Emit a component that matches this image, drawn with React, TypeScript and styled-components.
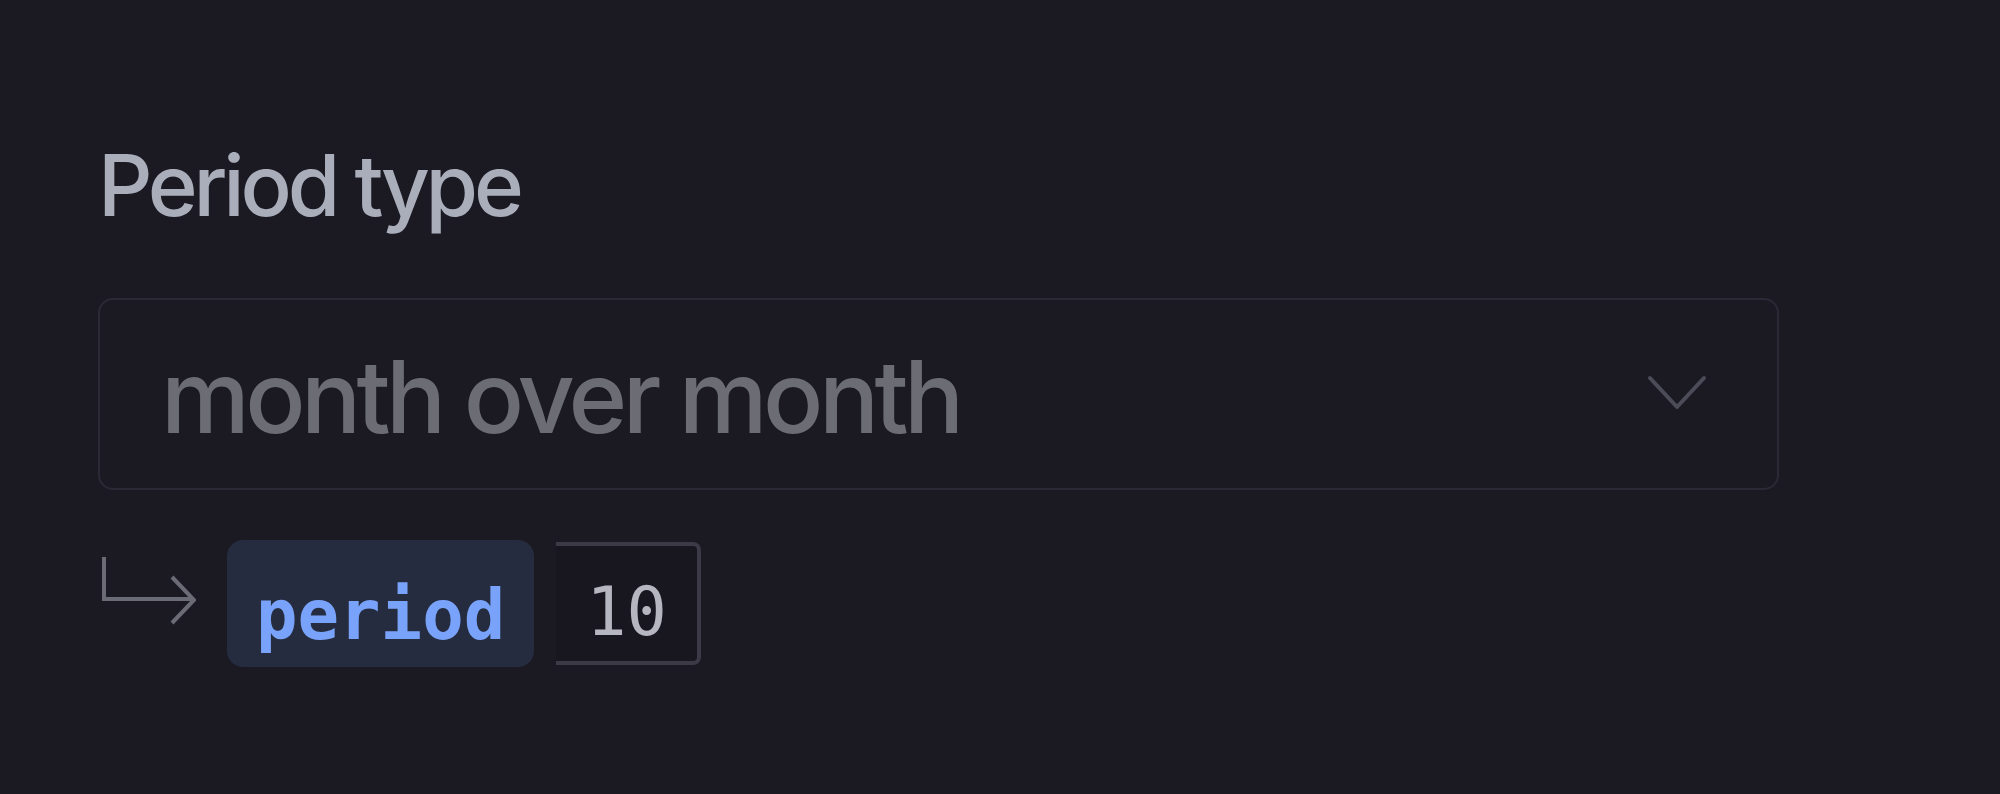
import styled, { createGlobalStyle } from "styled-components";

const GlobalStyle = createGlobalStyle`
  html, body {
    margin: 0;
    padding: 0;
    background: #1b1a23;
  }
  #root {
    min-height: 100vh;
  }
`;

const Page = styled.div`
  min-height: 794px;
  box-sizing: border-box;
  padding: 143px 0 0 98px;
  background: #1b1a23;
`;

const Field = styled.div`
  display: flex;
  flex-direction: column;
  width: 1681px;
`;

const Label = styled.label`
  font-family: Inter, "Noto Sans", sans-serif;
  font-weight: 500;
  font-size: 85px;
  line-height: 85px;
  letter-spacing: -4.2px;
  color: #a9aeba;
  margin-bottom: 70px;
`;

const Select = styled.div`
  box-sizing: border-box;
  height: 192px;
  display: flex;
  align-items: center;
  justify-content: space-between;
  padding: 5px 68px 0 61px;
  border: 2px solid #2a2a36;
  border-radius: 15px;
  background: #1b1a23;
`;

const SelectValue = styled.span`
  font-family: Inter, "Noto Sans", sans-serif;
  font-weight: 500;
  font-size: 100px;
  line-height: 100px;
  letter-spacing: -4.6px;
  color: #6c6c74;
`;

const Chevron = styled.svg`
  width: 64px;
  height: 42px;
  margin-top: -5px;
  flex-shrink: 0;
`;

const ParamRow = styled.div`
  display: flex;
  align-items: flex-start;
  margin-top: 50px;
`;

const ReturnArrow = styled.svg`
  width: 96px;
  height: 75px;
  margin: 15px 31px 0 2px;
  flex-shrink: 0;
`;

const ParamName = styled.span`
  box-sizing: border-box;
  height: 127px;
  padding: 41px 29px 0 29px;
  border-radius: 16px;
  background: #262c3f;
  font-family: "DejaVu Sans Mono", "Liberation Mono", monospace;
  font-weight: 700;
  font-size: 69px;
  line-height: 68px;
  color: #79a3fa;
`;

const ParamValue = styled.span`
  box-sizing: border-box;
  height: 123px;
  margin: 2px 0 0 22px;
  padding: 33px 30px 0 30px;
  border: 4px solid #3b3a46;
  border-left: none;
  border-radius: 0 8px 8px 0;
  background: #18171f;
  font-family: "DejaVu Sans Mono", "Liberation Mono", monospace;
  font-weight: 500;
  font-size: 67px;
  line-height: 66px;
  color: #b6b6c1;
`;

export default function App() {
  return (
    <>
      <GlobalStyle />
      <Page>
        <Field>
          <Label>Period type</Label>
          <Select>
            <SelectValue>month over month</SelectValue>
            <Chevron viewBox="0 0 64 42" fill="none">
              <path d="M5 5 L32 34 L59 5" stroke="#4c4c58" strokeWidth="4" strokeLinecap="round" strokeLinejoin="round" />
            </Chevron>
          </Select>
          <ParamRow>
            <ReturnArrow viewBox="0 0 96 75" fill="none">
              <path d="M4 2 V44 H92 M72 22 L94 45 L72 68" stroke="#6b6b75" strokeWidth="4" strokeLinejoin="miter" />
            </ReturnArrow>
            <ParamName>period</ParamName>
            <ParamValue>10</ParamValue>
          </ParamRow>
        </Field>
      </Page>
    </>
  );
}
